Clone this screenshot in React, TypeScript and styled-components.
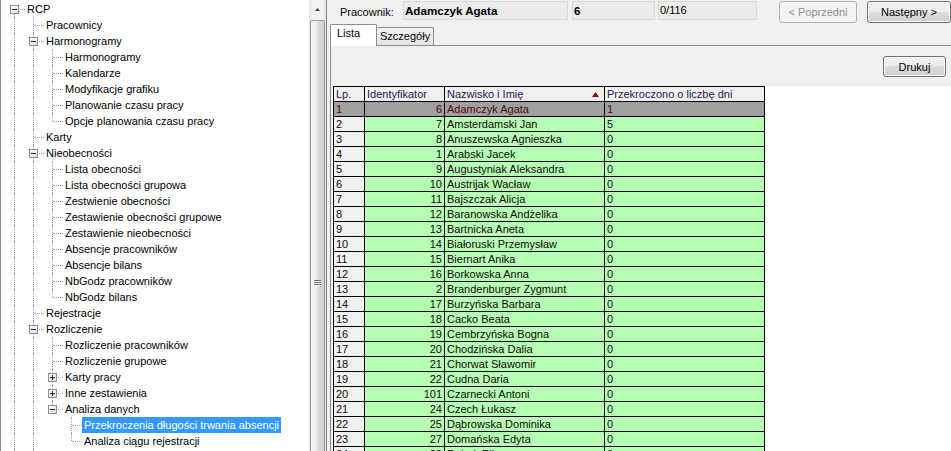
import React from "react";
import styled, { createGlobalStyle } from "styled-components";

interface TreeNode {
  label: string;
  children?: TreeNode[];
  open?: boolean;
  selected?: boolean;
}

interface FlatRow {
  node: TreeNode;
  depth: number;
  guides: boolean[];
  isLast: boolean;
  isFirst: boolean;
}

interface Employee {
  lp: number;
  id: number;
  name: string;
  days: number;
}

const leaf = (label: string): TreeNode => ({ label });

const TREE: TreeNode[] = [
  {
    label: "RCP",
    open: true,
    children: [
      leaf("Pracownicy"),
      {
        label: "Harmonogramy",
        open: true,
        children: [
          leaf("Harmonogramy"),
          leaf("Kalendarze"),
          leaf("Modyfikacje grafiku"),
          leaf("Planowanie czasu pracy"),
          leaf("Opcje planowania czasu pracy"),
        ],
      },
      leaf("Karty"),
      {
        label: "Nieobecności",
        open: true,
        children: [
          leaf("Lista obecności"),
          leaf("Lista obecności grupowa"),
          leaf("Zestwienie obecności"),
          leaf("Zestawienie obecności grupowe"),
          leaf("Zestawienie nieobecności"),
          leaf("Absencje pracowników"),
          leaf("Absencje bilans"),
          leaf("NbGodz pracowników"),
          leaf("NbGodz bilans"),
        ],
      },
      leaf("Rejestracje"),
      {
        label: "Rozliczenie",
        open: true,
        children: [
          leaf("Rozliczenie pracowników"),
          leaf("Rozliczenie grupowe"),
          { label: "Karty pracy", children: [leaf("Karta miesięczna")] },
          { label: "Inne zestawienia", children: [leaf("Zestawienie ogólne")] },
          {
            label: "Analiza danych",
            open: true,
            children: [
              { label: "Przekroczenia długości trwania absencji", selected: true },
              leaf("Analiza ciągu rejestracji"),
            ],
          },
        ],
      },
      leaf("Raporty"),
      leaf("Słowniki"),
    ],
  },
  leaf("Administracja"),
];

const EMPLOYEES: Employee[] = [
  { lp: 1, id: 6, name: "Adamczyk Agata", days: 1 },
  { lp: 2, id: 7, name: "Amsterdamski Jan", days: 5 },
  { lp: 3, id: 8, name: "Anuszewska Agnieszka", days: 0 },
  { lp: 4, id: 1, name: "Arabski Jacek", days: 0 },
  { lp: 5, id: 9, name: "Augustyniak Aleksandra", days: 0 },
  { lp: 6, id: 10, name: "Austrijak Wacław", days: 0 },
  { lp: 7, id: 11, name: "Bajszczak Alicja", days: 0 },
  { lp: 8, id: 12, name: "Baranowska Andżelika", days: 0 },
  { lp: 9, id: 13, name: "Bartnicka Aneta", days: 0 },
  { lp: 10, id: 14, name: "Białoruski Przemysław", days: 0 },
  { lp: 11, id: 15, name: "Biernart Anika", days: 0 },
  { lp: 12, id: 16, name: "Borkowska Anna", days: 0 },
  { lp: 13, id: 2, name: "Brandenburger Zygmunt", days: 0 },
  { lp: 14, id: 17, name: "Burzyńska Barbara", days: 0 },
  { lp: 15, id: 18, name: "Cacko Beata", days: 0 },
  { lp: 16, id: 19, name: "Cembrzyńska Bogna", days: 0 },
  { lp: 17, id: 20, name: "Chodzińska Dalia", days: 0 },
  { lp: 18, id: 21, name: "Chorwat Sławomir", days: 0 },
  { lp: 19, id: 22, name: "Cudna Daria", days: 0 },
  { lp: 20, id: 101, name: "Czarnecki Antoni", days: 0 },
  { lp: 21, id: 24, name: "Czech Łukasz", days: 0 },
  { lp: 22, id: 25, name: "Dąbrowska Dominika", days: 0 },
  { lp: 23, id: 27, name: "Domańska Edyta", days: 0 },
  { lp: 24, id: 28, name: "Dąbek Eliza", days: 0 },
];

const SELECTED_LP = 1;

const flatten = (
  nodes: TreeNode[],
  depth: number,
  guides: boolean[],
  out: FlatRow[]
) => {
  nodes.forEach((node, i) => {
    const isLast = i === nodes.length - 1;
    out.push({ node, depth, guides, isLast, isFirst: depth === 0 && i === 0 });
    if (node.children && node.open) {
      flatten(node.children, depth + 1, [...guides, !isLast], out);
    }
  });
  return out;
};

const TREE_ROWS = flatten(TREE, 0, [], []);

const App: React.FC = () => {
  return (
    <>
      <GlobalStyle />
      <Window>
        <TreePanel>
          <TreeBody>
            {TREE_ROWS.map((row, i) => (
              <TreeRow key={i}>
                {row.guides.map((line, g) => (
                  <Guide key={g} $line={line} />
                ))}
                <Elbow $top={!row.isFirst} $bottom={!row.isLast}>
                  {row.node.children && <Expander $open={!!row.node.open} />}
                </Elbow>
                <TreeLabel $selected={!!row.node.selected}>
                  {row.node.label}
                </TreeLabel>
              </TreeRow>
            ))}
          </TreeBody>
          <Scrollbar>
            <ScrollButton>
              <svg width="5" height="3" viewBox="0 0 5 3">
                <polygon points="0,3 2.5,0 5,3" fill="#3c3c3c" />
              </svg>
            </ScrollButton>
            <ScrollThumb>
              <Grip>
                <GripLine />
                <GripLine />
                <GripLine />
              </Grip>
            </ScrollThumb>
          </Scrollbar>
        </TreePanel>

        <RightPanel>
          <Header>
            <FieldLabel>Pracownik:</FieldLabel>
            <Field $width={165} $gap={0} $bold>
              Adamczyk Agata
            </Field>
            <Field $width={83} $gap={4} $bold>
              6
            </Field>
            <Field $width={99} $gap={3}>
              0/116
            </Field>
            <WinButton $width={78} $height={22} $gap={22} disabled>
              &lt; Poprzedni
            </WinButton>
            <WinButton $width={84} $height={22} $gap={10}>
              Następny &gt;
            </WinButton>
          </Header>

          <TabStrip>
            <Tab $active $width={47} $pad={6}>
              Lista
            </Tab>
            <Tab $active={false} $width={58} $pad={3}>
              Szczegóły
            </Tab>
          </TabStrip>

          <TabPage>
            <Toolbar>
              <WinButton $width={63} $height={21} $gap={0}>
                Drukuj
              </WinButton>
            </Toolbar>
            <GridArea>
              <GridTable>
                <GridRow>
                  <HeaderCell>Lp.</HeaderCell>
                  <HeaderCell>Identyfikator</HeaderCell>
                  <HeaderCell>
                    <span>Nazwisko i Imię</span>
                    <svg width="7" height="5" viewBox="0 0 7 5">
                      <polygon points="0,5 3.5,0 7,5" fill="#8b0a0a" />
                    </svg>
                  </HeaderCell>
                  <HeaderCell>Przekroczono o liczbę dni</HeaderCell>
                </GridRow>
                {EMPLOYEES.map((e) => {
                  const selected = e.lp === SELECTED_LP;
                  return (
                    <GridRow key={e.lp}>
                      <Cell $kind="index" $selected={selected}>
                        {e.lp}
                      </Cell>
                      <Cell $kind="data" $selected={selected} $right>
                        {e.id}
                      </Cell>
                      <Cell $kind="data" $selected={selected}>
                        {e.name}
                      </Cell>
                      <Cell $kind="data" $selected={selected}>
                        {e.days}
                      </Cell>
                    </GridRow>
                  );
                })}
              </GridTable>
            </GridArea>
          </TabPage>
        </RightPanel>
      </Window>
    </>
  );
};

export default App;

const GlobalStyle = createGlobalStyle`
  html, body {
    margin: 0;
    padding: 0;
  }
  body {
    background: #f0f0f0;
    font-family: "Liberation Sans", Arial, sans-serif;
    font-size: 11px;
    color: #000;
  }
  * {
    box-sizing: border-box;
  }
`;

const Window = styled.div`
  display: flex;
  width: 951px;
  height: 451px;
  overflow: hidden;
  background: #f0f0f0;
`;

/* ---------- tree ---------- */

const TreePanel = styled.div`
  flex: 0 0 327px;
  display: flex;
  height: 100%;
  overflow: hidden;
  background: #fff;
  border-left: 1px solid #828790;
  border-right: 1px solid #828790;
`;

const TreeBody = styled.div`
  flex: 1;
  padding: 1px 0 0 4px;
  overflow: hidden;
`;

const TreeRow = styled.div`
  display: flex;
  height: 16px;
  white-space: nowrap;
`;

const Guide = styled.span<{ $line: boolean }>`
  position: relative;
  flex: 0 0 19px;

  &::before {
    content: "";
    display: ${({ $line }) => ($line ? "block" : "none")};
    position: absolute;
    left: 9px;
    top: 0;
    bottom: 0;
    border-left: 1px dotted #a0a0a0;
  }
`;

const Elbow = styled.span<{ $top: boolean; $bottom: boolean }>`
  position: relative;
  flex: 0 0 19px;

  &::before {
    content: "";
    position: absolute;
    left: 9px;
    top: ${({ $top }) => ($top ? "0" : "8px")};
    bottom: ${({ $bottom }) => ($bottom ? "0" : "8px")};
    border-left: 1px dotted #a0a0a0;
  }

  &::after {
    content: "";
    position: absolute;
    left: 10px;
    right: -1px;
    top: 8px;
    border-top: 1px dotted #a0a0a0;
  }
`;

const Expander = styled.span<{ $open: boolean }>`
  position: absolute;
  left: 5px;
  top: 4px;
  width: 9px;
  height: 9px;
  z-index: 1;
  border: 1px solid #919191;
  background: linear-gradient(135deg, #ffffff 0%, #f0f0f0 50%, #d6d6d6 100%);

  &::before {
    content: "";
    position: absolute;
    left: 1px;
    top: 3px;
    width: 5px;
    height: 1px;
    background: #2a2a2a;
  }

  &::after {
    content: "";
    display: ${({ $open }) => ($open ? "none" : "block")};
    position: absolute;
    left: 3px;
    top: 1px;
    width: 1px;
    height: 5px;
    background: #2a2a2a;
  }
`;

const TreeLabel = styled.span<{ $selected: boolean }>`
  margin-left: 1px;
  padding: 0 2px;
  height: 16px;
  line-height: 16px;
  background: ${({ $selected }) => ($selected ? "#3399ff" : "transparent")};
  color: ${({ $selected }) => ($selected ? "#fff" : "#000")};
`;

const Scrollbar = styled.div`
  flex: 0 0 17px;
  display: flex;
  flex-direction: column;
  background: linear-gradient(
    to right,
    #e3e3e3,
    #f2f2f2 20%,
    #f2f2f2 80%,
    #e3e3e3
  );
`;

const ScrollButton = styled.div`
  flex: 0 0 19px;
  display: flex;
  align-items: center;
  justify-content: center;
`;

const ScrollThumb = styled.div`
  flex: 0 0 524px;
  margin: 1px 1px 0;
  display: flex;
  align-items: center;
  justify-content: center;
  border: 1px solid #979797;
  border-radius: 2px;
  background: linear-gradient(
    to right,
    #f6f6f6 0%,
    #ebebeb 45%,
    #dadada 55%,
    #d0d0d0 100%
  );
`;

const Grip = styled.div`
  display: flex;
  flex-direction: column;
  gap: 1px;
  width: 7px;
`;

const GripLine = styled.div`
  height: 1px;
  background: #6a6a6a;
  box-shadow: 0 1px 0 #fafafa;
`;

/* ---------- right side ---------- */

const RightPanel = styled.div`
  flex: 1;
  min-width: 0;
  margin-left: 3px;
  display: flex;
  flex-direction: column;
  overflow: hidden;
`;

const Header = styled.div`
  flex: 0 0 24px;
  display: flex;
  align-items: flex-start;
  padding: 1px 0 0 10px;
  white-space: nowrap;
`;

const FieldLabel = styled.span`
  flex: 0 0 63px;
  margin-top: 1px;
  line-height: 20px;
`;

const Field = styled.div<{ $width: number; $gap: number; $bold?: boolean }>`
  flex: 0 0 ${({ $width }) => $width}px;
  margin-left: ${({ $gap }) => $gap}px;
  height: 19px;
  padding: 0 1px;
  border: 1px solid #d9d9d9;
  background: #ebebeb;
  line-height: 17px;
  font-weight: ${({ $bold }) => ($bold ? "bold" : "normal")};
  font-size: ${({ $bold }) => ($bold ? "11.6px" : "11px")};
  overflow: hidden;
`;

const WinButton = styled.button<{ $width: number; $height: number; $gap: number }>`
  flex: 0 0 ${({ $width }) => $width}px;
  width: ${({ $width }) => $width}px;
  height: ${({ $height }) => $height}px;
  margin: 0 0 0 ${({ $gap }) => $gap}px;
  padding: 0;
  font: inherit;
  color: #000;
  border: 1px solid #707070;
  border-radius: 3px;
  background: linear-gradient(#f2f2f2 0%, #ebebeb 50%, #dddddd 50%, #cfcfcf 100%);
  box-shadow: inset 0 0 0 1px #fbfbfb;

  &:disabled {
    color: #8d8d8d;
    border-color: #adb2b5;
    background: #f4f4f4;
    box-shadow: none;
  }
`;

const TabStrip = styled.div`
  flex: 0 0 22px;
  display: flex;
  align-items: flex-end;
  margin-bottom: -1px;
  position: relative;
  z-index: 1;
`;

const Tab = styled.div<{ $active: boolean; $width: number; $pad: number }>`
  flex: 0 0 ${({ $width }) => $width}px;
  height: ${({ $active }) => ($active ? "22px" : "18px")};
  margin-left: ${({ $active }) => ($active ? "0" : "-1px")};
  margin-bottom: ${({ $active }) => ($active ? "0" : "1px")};
  padding-left: ${({ $pad }) => $pad}px;
  border: 1px solid #898c95;
  border-bottom: none;
  border-radius: 2px 2px 0 0;
  line-height: 16px;
  white-space: nowrap;
  background: ${({ $active }) =>
    $active ? "#ffffff" : "linear-gradient(#f3f3f3, #e3e3e3)"};
`;

const TabPage = styled.div`
  flex: 1;
  min-height: 0;
  display: flex;
  flex-direction: column;
  padding-left: 2px;
  border-top: 1px solid #898c95;
  border-left: 1px solid #898c95;
  background: #f0f0f0;
`;

const Toolbar = styled.div`
  flex: 0 0 40px;
  display: flex;
  justify-content: flex-end;
  align-items: flex-start;
  padding: 10px 5px 0 0;
`;

const GridArea = styled.div`
  flex: 1;
  min-height: 0;
  overflow: hidden;
  background: #fff;
`;

const GridTable = styled.div`
  width: 432px;
  border-top: 1px solid #000;
  border-left: 1px solid #000;
`;

const GridRow = styled.div`
  display: grid;
  grid-template-columns: 31px 80px 160px 160px;
  height: 15px;
`;

const HeaderCell = styled.div`
  display: flex;
  align-items: center;
  justify-content: space-between;
  padding: 0 5px 0 2px;
  border-right: 1px solid #000;
  border-bottom: 1px solid #000;
  background: #f0f0f0;
  color: #2e1458;
  line-height: 14px;
  white-space: nowrap;
  overflow: hidden;
`;

const Cell = styled.div<{ $kind: "index" | "data"; $selected: boolean; $right?: boolean }>`
  padding: 0 2px;
  border-right: 1px solid #000;
  border-bottom: 1px solid #000;
  line-height: 14px;
  white-space: nowrap;
  overflow: hidden;
  text-align: ${({ $right }) => ($right ? "right" : "left")};
  color: ${({ $selected }) => ($selected ? "#4a0c0c" : "#140808")};
  background: ${({ $kind, $selected }) =>
    $selected ? "#a0a0a0" : $kind === "index" ? "#f0f0f0" : "#b4ffb4"};
`;
